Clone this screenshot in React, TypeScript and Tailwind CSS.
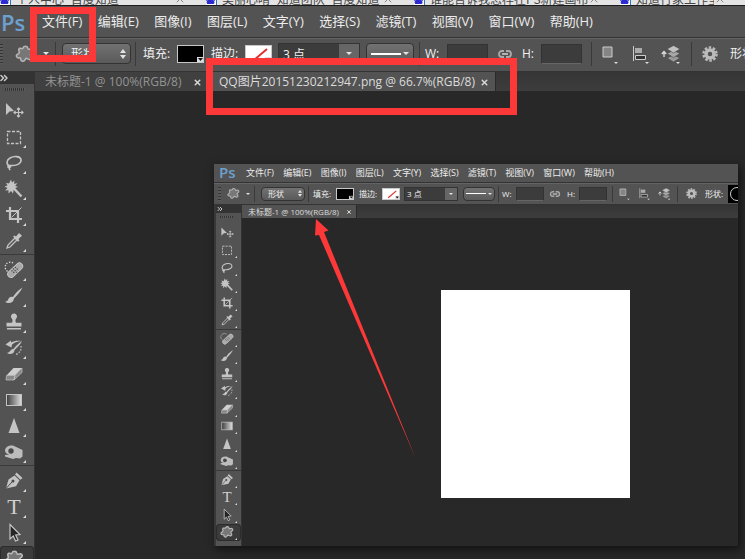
import React from 'react';
import { ChevronsRight, X } from 'lucide-react';

type Size = 'lg' | 'sm';

const menus = ['文件(F)', '编辑(E)', '图像(I)', '图层(L)', '文字(Y)', '选择(S)', '滤镜(T)', '视图(V)', '窗口(W)', '帮助(H)'];

const browserTabs = [
  { title: '个人中心_百度知道', width: 'w-[206px]' },
  { title: '美丽心晴_知道团队_百度知道', width: 'w-[208px]' },
  { title: '谁能告诉我怎样在PS新建画布', width: 'w-[206px]' },
  { title: '知道行家工作室_百度', width: 'w-[126px]' },
];

const uiFont = 'font-["Open_Sans","Noto_Sans_CJK_SC",sans-serif]';

// every measurement that differs between the main window and the nested one
const sizes = {
  lg: {
    menuBar: 'h-8 border-t border-[#1c1c1c]',
    logo: 'w-[42px] pl-px text-[22px]',
    menuList: 'w-[551px] text-[13px]',
    options: 'h-[34px] pb-0.5 text-[12px]',
    grip: 'w-[3px] h-5 mr-3',
    shape: 'w-5 h-5',
    shapeArrow: 'ml-2 w-1.5',
    sep1: 'ml-1.5 h-6',
    select: 'ml-1.5 w-[69px] h-[21px] pl-2 pr-1',
    sep2: 'ml-1 h-6',
    label: 'ml-[7px] w-[29px]',
    swatch: 'ml-[5px] w-[27px] h-[18px]',
    label2: 'ml-[7px] w-[29px]',
    points: 'ml-[6px] w-[82px] h-[22px]',
    pointsInput: 'pl-1',
    pointsArrow: 'w-5',
    line: 'ml-1.5 w-12 h-[21px] px-1',
    sep3: 'ml-[5px] h-6',
    w: 'ml-[5px] w-4',
    field: 'ml-1.5 w-[41px] h-5',
    link: 'ml-[9px] w-4 h-4',
    h: 'ml-[9px] w-3',
    field2: 'ml-[7px] w-[41px] h-5',
    sep4: 'ml-[9px] h-6',
    iconA: 'ml-2.5 w-4 h-5',
    iconB: 'ml-[13px] w-[18px] h-5',
    iconC: 'ml-3 w-5 h-5',
    sep5: 'ml-2.5 h-6',
    gear: 'ml-2.5 w-4 h-4',
    shapeLabel: 'ml-3 w-8',
    rail: 'w-[34px]',
    railHead: 'h-3',
    railGrip: 'w-5 h-[3px] ml-[5px] mt-1 mb-[7px]',
    tool: 'h-[26px] shrink-0 pl-1',
    toolIcon: 'w-5 h-5',
    corner: 'right-2 bottom-0.5 border-b-3 border-l-3',
    tabBar: 'h-[19px]',
    tab: 'text-[12px] pt-px pl-2.5 pr-1.5',
    close: 'w-[9px] h-[9px]',
  },
  sm: {
    menuBar: 'h-[18px] pb-0.5',
    logo: 'w-8 pl-[5px] text-[15px]',
    menuList: 'w-[368px] text-[9px]',
    options: 'h-[22px] text-[8px]',
    grip: 'w-[3px] h-3.5 ml-1 mr-1.5',
    shape: 'w-[13px] h-[13px]',
    shapeArrow: 'ml-1.5 w-1',
    sep1: 'ml-1 h-4',
    select: 'ml-1.5 w-11 h-3.5 pl-1.5 pr-0.5',
    sep2: 'ml-[3px] h-4',
    label: 'ml-1 w-5',
    swatch: 'ml-[3px] w-[18px] h-3',
    label2: 'ml-[5px] w-5',
    points: 'ml-1 w-[54px] h-3.5',
    pointsInput: 'pl-0.5',
    pointsArrow: 'w-3',
    line: 'ml-[5px] w-8 h-3.5 px-0.5',
    sep3: 'ml-[3px] h-4',
    w: 'ml-[3px] w-2.5',
    field: 'ml-1 w-7 h-3.5',
    link: 'ml-[5px] w-3 h-3',
    h: 'ml-1.5 w-2',
    field2: 'ml-1 w-7 h-3.5',
    sep4: 'ml-[5px] h-4',
    iconA: 'ml-1.5 w-[11px] h-[13px]',
    iconB: 'ml-2 w-3 h-[13px]',
    iconC: 'ml-2 w-[13px] h-[13px]',
    sep5: 'ml-1.5 h-4',
    gear: 'ml-2 w-[11px] h-[11px]',
    shapeLabel: 'ml-2 w-[23px]',
    rail: 'w-[27px] border-l-2 border-[#383838] pb-[5px]',
    railHead: 'h-2',
    railGrip: 'w-[13px] h-0.5 ml-1 mt-[3px] mb-1.5',
    tool: 'min-h-0 flex-1 pl-1',
    toolIcon: 'w-3.5 h-3.5',
    corner: 'right-1 bottom-px border-b-2 border-l-2',
    tabBar: 'h-[13px]',
    tab: 'text-[8px] pl-1.5 pr-1',
    close: 'w-1.5 h-1.5',
  },
};

const light = '#c4c4c4';

const blobPath = 'M8 4c.8-2.300 4.200-2.300 4.700 0 .2 1.500 1.300 1.300 2.500.900 2.300-.8 4 1.700 2.300 3.300-1.200 1-2.500 1.500-1.800 3 .6 1.300 1.800 2 .8 3.600-1.300 1.700-3.300.4-4.500-.300-1.300-.500-1.700.6-2.300 1.700-1.200 1.800-4 1.200-4-1 .1-1.300-.4-1.500-1.700-1.300-2.300.3-3.500-2.200-1.700-3.600 1.200-.8 2.400-1 2-2.500-.6-1.300-.9-2.700.4-3.500C6 3.800 7.500 5.600 8 4z';

function BlobIcon({ className }: { className: string }) {
  return (
    <svg viewBox="0 0 20 20" className={className}>
      <path d={blobPath} fill="#777" stroke="#b5b5b5" strokeWidth="1.600" />
    </svg>
  );
}

function DownArrow({ className = 'w-1.5' }: { className?: string }) {
  return (
    <svg viewBox="0 0 6 3" className={`shrink-0 ${className}`}>
      <path d="M0 0h6L3 3z" fill="#e4e4e4" />
    </svg>
  );
}

function Separator({ className }: { className: string }) {
  return <span className={`w-px shrink-0 bg-[#3a3a3a] ${className}`} />;
}

const toolGroups: { grow: string; tools: { name: string; art: React.ReactNode }[] }[] = [
  {
    grow: 'flex-6',
    tools: [
      {
        name: '移动工具',
        art: (
          <>
            <path d="M2 2v12l3.500-3.500 4.500-.500z" fill={light} />
            <path d="M14.500 7v9M10 11.500h9M13 8.500l1.500-1.500L16 8.500M13 14.500l1.500 1.500 1.500-1.500M11.500 10L10 11.500l1.500 1.500M17.500 10l1.500 1.500-1.500 1.500" fill="none" stroke={light} strokeWidth="1.2" />
          </>
        ),
      },
      { name: '矩形选框工具', art: <rect x="3.500" y="4.500" width="13" height="12" fill="none" stroke={light} strokeWidth="1.3" strokeDasharray="3 1.500" /> },
      {
        name: '套索工具',
        art: <path d="M5 13c-3-2-2.500-6 1-8 4-2.200 10-2 11 1.500.8 3.500-4 6-8 6-2 0-5-.500-5 1.200 0 1.500 3 .8 2.500-.500-.3-1-2-.6-1.500 1 .2 1.200 1 1.600.5 3" fill="none" stroke={light} strokeWidth="1.600" />,
      },
      {
        name: '魔棒工具',
        art: (
          <>
            <path d="M7 .5l1 3 2.500-2-.5 3.200 3.500-.4-2.300 2.500 2.800 1.200-3 1 1.700 2.800-3-.7L9 14.500l-2-2.600-2.500 2.600 0-3.300-3.300.3L3.500 9 .5 7.500l3-1L2 3.700l3 .8z" fill={light} />
            <path d="M10 9.500l7.500 8" stroke={light} strokeWidth="2.400" />
          </>
        ),
      },
      {
        name: '裁剪工具',
        art: (
          <>
            <path d="M6 2v12h12M2 6h12v12" fill="none" stroke={light} strokeWidth="2.200" />
            <path d="M7.500 12.500L17.500 2.500" stroke={light} />
          </>
        ),
      },
      {
        name: '吸管工具',
        art: (
          <>
            <path d="M3 17l1-3 7-7 2 2-7 7z" fill="#555" stroke={light} strokeWidth="1.3" />
            <path d="M9 5.500l1.500-1 1.500 1 3-3.500 3 2.800L14.500 8l1 1.500-1.500 1.300z" fill={light} />
          </>
        ),
      },
    ],
  },
  {
    grow: 'flex-8',
    tools: [
      {
        name: '污点修复画笔工具',
        art: (
          <>
            <path d="M9 3a5 5 0 1 0-4 9" fill="none" stroke="#ddd" strokeWidth="1.300" strokeDasharray="1.300 1.500" />
            <rect x="2" y="7" width="18" height="6.500" rx="3.200" fill="#a9a9a9" stroke={light} transform="rotate(-43 11 10)" />
            <path d="M9 8.500l4 4M11 7l3.500 3.500M7.500 10.500l3.500 3" stroke="#444" strokeWidth="1.200" strokeDasharray="1.200 1.200" />
          </>
        ),
      },
      {
        name: '画笔工具',
        art: <path d="M18.500 1.500C14 4.500 10.500 8 9 11c-2.500-.7-4 .5-4.700 2.300C3.800 15 2.500 15.500 1 15.800c3 2.200 8.500 1.700 9-3.300C13 9.500 17 5 18.500 1.500z" fill={light} />,
      },
      {
        name: '仿制图章工具',
        art: <path d="M10 1.500a3 3 0 0 1 2 5.300c-.7.700-.7 3 0 4h5.500v3.700h-15v-3.700H8c.7-1 .7-3.300 0-4a3 3 0 0 1 2-5.300zM3 16h14v1.500H3z" fill={light} />,
      },
      {
        name: '历史记录画笔工具',
        art: (
          <>
            <path d="M18 3C14 5.500 11 9 9.500 11c-3-.500-2.500 3-6.500 4 3 2 7.500 1 7.500-3C13.500 9 17 6 18 3z" fill={light} />
            <path d="M1.500 6.500L7 2.500v2c3-1.500 6-2 10.500-1.500-5 .5-7 1.800-9.500 3.500l-.5 3z" fill={light} />
            <path d="M17 8c.5 4-1 6.500-5 8.500" fill="none" stroke={light} strokeWidth="1.300" strokeDasharray="1.500 1.500" />
          </>
        ),
      },
      {
        name: '橡皮擦工具',
        art: (
          <>
            <path d="M2.500 11.500L9.500 4H18L11 11.500z" fill="#cfcfcf" />
            <path d="M2.500 11.500H11l-1 4.500H2zM11 11.500L18 4v4.500L10 16z" fill="#888" stroke={light} strokeWidth=".7" />
          </>
        ),
      },
      { name: '渐变工具', art: <rect x="2.500" y="4.500" width="15" height="11" fill="url(#toolGradient)" stroke={light} /> },
      { name: '锐化工具', art: <path d="M10 2l5.500 15h-11z" fill={light} /> },
      {
        name: '减淡工具',
        art: (
          <>
            <path d="M1 8.500c.5-4 4-5.500 8-5l9.500 4.500v6.500l-2.500 2-4-.500-3 1-8-2.500v-1.500l4.500-.500C3 12 1 11 1 8.500z" fill="#bdbdbd" />
            <circle cx="7" cy="9" r="2.700" fill="#484848" />
          </>
        ),
      },
    ],
  },
  {
    grow: 'flex-4',
    tools: [
      {
        name: '钢笔工具',
        art: (
          <>
            <path d="M12.500 1.500l6 5.500-2 1.800-5.500-5.300z" fill={light} />
            <path d="M2 17.500l2.500-9 6-4 5 4.800-3.500 6z" fill={light} />
            <path d="M2 17.500l6-6.500" stroke="#484848" />
            <circle cx="9" cy="10" r="1.500" fill="#484848" />
          </>
        ),
      },
      { name: '横排文字工具', art: null },
      { name: '路径选择工具', art: <path d="M6 1.500v14.500l3.300-3 2.200 5 2.500-1-2.300-5 4.300-.500z" fill="#252525" stroke={light} strokeWidth="1.200" /> },
      { name: '自定形状工具', art: <path d={blobPath} fill="#777" stroke="#bbb" strokeWidth="1.600" /> },
    ],
  },
];

function ToolArt({ name, art, size }: { name: string; art: React.ReactNode; size: Size }) {
  if (name === '横排文字工具') {
    return (
      <span className={`text-center font-['Liberation_Serif',serif] text-[#d0d0d0] ${size === 'lg' ? 'w-5 text-[22px] leading-5' : 'w-3.5 text-[15px] leading-[14px]'}`}>
        T
      </span>
    );
  }
  return <svg viewBox="0 0 20 20" className={sizes[size].toolIcon}>{art}</svg>;
}

function MenuBar({ size }: { size: Size }) {
  const s = sizes[size];
  return (
    <nav className={`flex shrink-0 items-center whitespace-nowrap bg-[#535353] ${s.menuBar}`}>
      <span className={`shrink-0 font-['Open_Sans',sans-serif] font-semibold leading-none text-[#6ea0cf] ${s.logo}`}>Ps</span>
      <div className={`flex justify-between text-[#ececec] ${s.menuList}`}>
        {menus.map((m) => (
          <button key={m} type="button" className="leading-none">{m}</button>
        ))}
      </div>
    </nav>
  );
}

function Swatch({ size, stroke = false }: { size: Size; stroke?: boolean }) {
  return (
    <button
      type="button"
      aria-label={stroke ? '描边颜色' : '填充颜色'}
      className={`relative shrink-0 overflow-hidden border border-[#c8c8c8] ${stroke ? 'bg-white' : 'bg-black'} ${sizes[size].swatch}`}
    >
      <svg viewBox="0 0 25 16" className="block h-full w-full">
        {stroke && <path d="M8 14L21 3" stroke="#e03030" strokeWidth="2" />}
        <path d="M19 11h6v5h-6z" fill="#ddd" />
        <path d="M20 12h5l-2.500 3z" fill="#111" />
      </svg>
    </button>
  );
}

function OptionsBar({ size }: { size: Size }) {
  const s = sizes[size];
  const arrow = size === 'lg' ? 'w-1.5' : 'w-1';
  const raised = 'shrink-0 rounded-sm border border-[#333] bg-linear-to-b from-[#727272] to-[#5a5a5a]';
  const field = 'shrink-0 border border-[#333] border-b-[#666] bg-[#3c3c3c]';
  return (
    <div className={`flex shrink-0 items-center overflow-hidden whitespace-nowrap border-t border-[#333] bg-[#535353] leading-none text-[#f0f0f0] shadow-[inset_0_1px_0_#646464] ${s.options}`}>
      <span className={`shrink-0 bg-[repeating-linear-gradient(#333_0_1px,#5c5c5c_1px_3px)] ${s.grip}`} />
      <BlobIcon className={`shrink-0 ${s.shape}`} />
      <DownArrow className={s.shapeArrow} />
      <Separator className={s.sep1} />
      <div className={`flex items-center ${raised} ${s.select}`}>
        <select aria-label="工具模式" className="min-w-0 grow appearance-none outline-none">
          <option>形状</option>
        </select>
        <svg viewBox="0 0 6 10" className={`shrink-0 ${arrow}`}>
          <path d="M0 4h6L3 0zM0 6h6L3 10z" fill="#e4e4e4" />
        </svg>
      </div>
      <Separator className={s.sep2} />
      <span className={`shrink-0 ${s.label}`}>填充:</span>
      <Swatch size={size} />
      <span className={`shrink-0 ${s.label2}`}>描边:</span>
      <Swatch size={size} stroke />
      <div className={`flex border border-[#333] bg-[#3c3c3c] shrink-0 ${s.points}`}>
        <input aria-label="描边宽度" defaultValue="3 点" className={`min-w-0 grow outline-none ${s.pointsInput}`} />
        <button type="button" aria-label="描边宽度选项" className={`flex shrink-0 items-center justify-center bg-[#666] ${s.pointsArrow}`}>
          <DownArrow className={arrow} />
        </button>
      </div>
      <button type="button" aria-label="描边类型" className={`flex items-center gap-0.5 ${raised} ${s.line}`}>
        <span className={`grow bg-white ${size === 'lg' ? 'h-0.5' : 'h-px'}`} />
        <DownArrow className={arrow} />
      </button>
      <Separator className={s.sep3} />
      <label htmlFor={`w-${size}`} className={`shrink-0 ${s.w}`}>W:</label>
      <input id={`w-${size}`} className={`${field} ${s.field}`} />
      <svg viewBox="0 0 16 16" className={`shrink-0 ${s.link}`}>
        <path d="M7 5H5a3 3 0 0 0 0 6h2M9 5h2a3 3 0 0 1 0 6H9" fill="none" stroke="#aaa" strokeWidth="1.800" />
        <path d="M5 8h6" stroke="#ccc" strokeWidth="1.600" />
      </svg>
      <label htmlFor={`h-${size}`} className={`shrink-0 ${s.h}`}>H:</label>
      <input id={`h-${size}`} className={`${field} ${s.field2}`} />
      <Separator className={s.sep4} />
      <svg viewBox="0 0 16 20" className={`shrink-0 ${s.iconA}`}>
        <path d="M1 3h9v10H1z" fill="#858585" stroke="#ccc" />
        <path d="M12 18h4l-2 2z" fill="#ddd" />
      </svg>
      <svg viewBox="0 0 18 20" className={`shrink-0 ${s.iconB}`}>
        <path d="M2.500 2v15" stroke="#ccc" />
        <path d="M4 4h7v5H4z" fill="#aaa" />
        <path d="M4.500 11.500h10v4h-10z" fill="#333" stroke="#ccc" />
        <path d="M14 18h4l-2 2z" fill="#ddd" />
      </svg>
      <svg viewBox="0 0 20 20" className={`shrink-0 ${s.iconC}`}>
        <path d="M6 14l6.500-3 6.500 3-6.500 4z" fill="#999" stroke="#444" strokeWidth=".6" />
        <path d="M6 9.500l6.500-3 6.500 3-6.500 4z" fill="#a8a8a8" stroke="#444" strokeWidth=".6" />
        <path d="M6 5l6.500-3.500L19 5l-6.500 4z" fill="#c0c0c0" stroke="#444" strokeWidth=".6" />
        <path d="M3 13V8M.800 10L3 7.500 5.200 10" fill="none" stroke="#ddd" strokeWidth="1.300" />
        <path d="M15 18h4l-2 2z" fill="#ddd" />
      </svg>
      <Separator className={s.sep5} />
      <svg viewBox="0 0 16 16" className={`shrink-0 ${s.gear}`}>
        <circle cx="8" cy="8" r="6.500" fill="none" stroke="#bbb" strokeWidth="2.500" strokeDasharray="2.500 1.580" />
        <circle cx="8" cy="8" r="4" fill="none" stroke="#bbb" strokeWidth="3.500" />
      </svg>
      <span className={`shrink-0 ${s.shapeLabel}`}>形状:</span>
      {size === 'sm' && (
        <svg viewBox="0 0 18 18" className="h-[18px] w-[18px] shrink-0 bg-black">
          <circle cx="9" cy="9" r="6.500" fill="none" stroke="#ccc" />
        </svg>
      )}
    </div>
  );
}

function ToolRail({ size }: { size: Size }) {
  const s = sizes[size];
  return (
    <aside className={`flex shrink-0 flex-col overflow-hidden bg-[#535353] ${s.rail}`}>
      <div className={`flex shrink-0 items-center bg-[#333] ${s.railHead}`}>
        <ChevronsRight className={size === 'lg' ? 'size-3 -ml-0.5' : 'size-2'} color="#ccc" strokeWidth={3} />
      </div>
      <span className={`shrink-0 bg-[repeating-linear-gradient(90deg,#333_0_1px,#5c5c5c_1px_2px)] ${s.railGrip}`} />
      {toolGroups.map((group, i) => (
        <div
          key={group.grow}
          className={`flex flex-col ${size === 'sm' ? `min-h-0 ${group.grow}` : 'shrink-0'} ${i > 0 ? 'border-t border-[#3a3a3a]' : ''} ${i > 0 && size === 'lg' ? 'pt-0.5' : ''}`}
        >
          {group.tools.map((t) => (
            <button
              key={t.name}
              type="button"
              aria-label={t.name}
              className={`relative flex items-center ${s.tool} ${t.name === '自定形状工具' ? 'rounded-sm bg-[#3b3b3b] shadow-[inset_0_0_0_1px_#2c2c2c]' : ''}`}
            >
              <ToolArt name={t.name} art={t.art} size={size} />
              {t.name !== '移动工具' && <span className={`absolute border-b-[#ddd] border-l-transparent ${s.corner}`} />}
            </button>
          ))}
        </div>
      ))}
    </aside>
  );
}

function DocumentTab({ title, size, active = false, className = '' }: { title: string; size: Size; active?: boolean; className?: string }) {
  const s = sizes[size];
  return (
    <div className={`flex shrink-0 items-center justify-between whitespace-nowrap border-r border-[#2a2a2a] ${s.tab} ${active ? 'bg-[#535353] text-[#dcdcdc]' : 'bg-[#404040] text-[#939393]'} ${className}`}>
      <button type="button" className="leading-none">{title}</button>
      <button type="button" aria-label="关闭">
        <X className={s.close} color="#d8d8d8" strokeWidth={4} />
      </button>
    </div>
  );
}

function EditorWindow({ size, tabs, children }: { size: Size; tabs: React.ReactNode; children: React.ReactNode }) {
  return (
    <div className={`flex min-h-0 grow flex-col overflow-hidden ${uiFont}`}>
      <MenuBar size={size} />
      <OptionsBar size={size} />
      <div className="flex min-h-0 grow border-t border-[#333]">
        <ToolRail size={size} />
        <main className="flex min-w-0 grow flex-col border-l border-[#333] bg-[#282828]">
          <div className={`flex shrink-0 bg-linear-to-b from-[#353535] to-[#3d3d3d] ${sizes[size].tabBar}`}>{tabs}</div>
          {children}
        </main>
      </div>
    </div>
  );
}

export default function App() {
  return (
    <div className="relative flex h-screen flex-col overflow-hidden bg-[#282828]">
      <svg className="absolute size-0" aria-hidden="true">
        <linearGradient id="toolGradient">
          <stop offset="0" stopColor="#3c3c3c" />
          <stop offset="1" stopColor="#dedede" />
        </linearGradient>
      </svg>

      <header className="flex h-[5px] shrink-0 items-end overflow-hidden bg-[#e4e4e4] font-['Noto_Sans_CJK_SC',sans-serif] text-[12px] leading-3 text-[#444]">
        {browserTabs.map((t) => (
          <div key={t.title} className={`flex shrink-0 items-end overflow-hidden ${t.width}`}>
            <svg viewBox="0 0 11 12" className="mr-[5px] h-3 w-[11px] shrink-0 border-r border-[#2c78b8] bg-white">
              <path d="M5 5c2 0 2 2 4 3.500 1 2-.5 3.500-2 3h-4c-1.500.5-3-1-2-3C3 7 3 5 5 5z" fill="#2b2bd0" />
              <path d="M0 5h2v3H0zM8 5h2v3H8z" fill="#2b2bd0" />
            </svg>
            <span className="grow overflow-hidden whitespace-nowrap">{t.title}</span>
            <X className="mr-5 size-3 shrink-0" color="#888" />
          </div>
        ))}
      </header>

      <EditorWindow
        size="lg"
        tabs={
          <>
            <DocumentTab title="未标题-1 @ 100%(RGB/8)" size="lg" className="w-[174px]" />
            <DocumentTab title="QQ图片20151230212947.png @ 66.7%(RGB/8)" size="lg" active className="w-[287px]" />
          </>
        }
      >
        <div className="flex min-h-0 grow pb-[13px] pl-[179px] pr-[7px] pt-[73px]">
          <div className="flex min-w-0 grow shadow-[2px_3px_8px_#111]">
            <EditorWindow
              size="sm"
              tabs={<DocumentTab title="未标题-1 @ 100%(RGB/8)" size="sm" active className="w-[115px]" />}
            >
              <div className="min-h-0 grow pb-12 pl-[199px] pr-[108px] pt-[72px]">
                <div className="h-full bg-white" />
              </div>
            </EditorWindow>
          </div>
        </div>
      </EditorWindow>

      {/* annotations drawn over the window */}
      <div className="pointer-events-none absolute left-[30px] top-[7px] h-[55px] w-[66px] border-7 border-[#fc3838]" />
      <div className="pointer-events-none absolute left-[206px] top-[58px] h-[57px] w-[311px] border-7 border-[#fc3838]" />
      <svg viewBox="0 0 102 242" className="pointer-events-none absolute left-[314px] top-[218px] h-[242px] w-[102px]">
        <path d="M2 1l12.500 11.500-4.500 1.500 91.500 226L5 17l-4 .5z" fill="#fc3838" />
      </svg>
    </div>
  );
}
